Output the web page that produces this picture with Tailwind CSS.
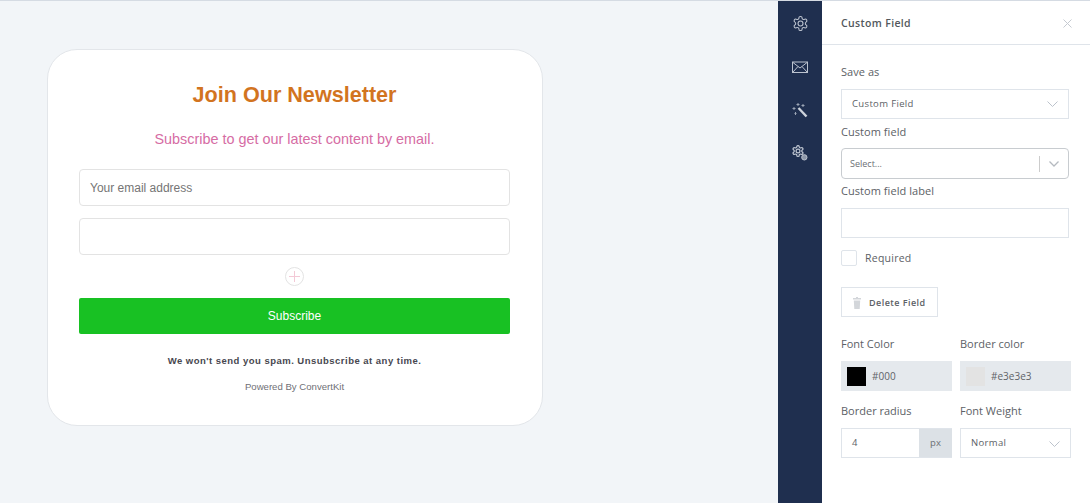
<!doctype html>
<html>
<head>
<meta charset="utf-8">
<script src="https://cdn.jsdelivr.net/npm/@tailwindcss/browser@4"></script>
</head>
<body class="m-0 overflow-hidden">
<div class="flex flex-col w-[1090px] h-[503px] overflow-hidden bg-[#f2f5f8] font-['Liberation_Sans',sans-serif]">
  <div class="h-px shrink-0 bg-[#d5dbe3]"></div>
  <div class="flex flex-1 min-h-0">
    <main class="w-[778px] shrink-0 pl-[47px] pt-[48px]">
      <section class="w-[496px] h-[377px] box-border bg-white border border-[#e3e6ea] rounded-[30px] pl-[31px] pr-[32px] flex flex-col">
        <h1 class="mt-[31px] h-[28px] leading-[28px] text-center text-[21.6px] font-bold text-[#d2741f]">Join Our Newsletter</h1>
        <p class="mt-[21px] h-[18px] leading-[18px] text-center text-[14.4px] text-[#d66ca4]">Subscribe to get our latest content by email.</p>
        <div class="mt-[21px] h-[37px] box-border border border-[#e3e3e3] rounded-[4px] pl-[10px] flex items-center text-[12px] text-[#757575]">Your email address</div>
        <div class="mt-[12px] h-[37px] box-border border border-[#e3e3e3] rounded-[4px]"></div>
        <div class="mt-[12px] h-[19px] flex justify-center">
          <svg width="19" height="19" viewBox="0 0 19 19" fill="none"><circle cx="9.5" cy="9.5" r="9" stroke="#e3e3e3"/><path d="M9.500 4v11M4 9.500h11" stroke="#f3c9d6"/></svg>
        </div>
        <button class="mt-[12px] h-[36px] shrink-0 rounded-[2px] bg-[#18c123] text-white text-[12px] font-['Liberation_Sans',sans-serif]">Subscribe</button>
        <p class="mt-[21px] h-[12px] leading-[12px] text-center text-[9.5px] font-bold tracking-[0.48px] text-[#47474f]">We won't send you spam. Unsubscribe at any time.</p>
        <p class="mt-[14px] h-[12px] leading-[12px] text-center text-[9.6px] text-[#6f7076]">Powered By ConvertKit</p>
      </section>
    </main>

    <nav class="w-[44px] shrink-0 bg-[#1f2f4f] flex flex-col items-center pt-[14px] gap-[27px]">
      <svg class="w-[17px] h-[17px]" viewBox="0 0 24 24" fill="none" stroke="#bcc3cf" stroke-width="1.500"><path d="M12.220 2h-.44a2 2 0 0 0-2 2v.18a2 2 0 0 1-1 1.730l-.43.25a2 2 0 0 1-2 0l-.15-.08a2 2 0 0 0-2.730.73l-.22.38a2 2 0 0 0 .73 2.730l.15.1a2 2 0 0 1 1 1.720v.51a2 2 0 0 1-1 1.740l-.15.09a2 2 0 0 0-.73 2.730l.22.38a2 2 0 0 0 2.730.73l.15-.08a2 2 0 0 1 2 0l.43.25a2 2 0 0 1 1 1.730V20a2 2 0 0 0 2 2h.44a2 2 0 0 0 2-2v-.18a2 2 0 0 1 1-1.730l.43-.25a2 2 0 0 1 2 0l.15.08a2 2 0 0 0 2.730-.73l.22-.39a2 2 0 0 0-.73-2.730l-.15-.08a2 2 0 0 1-1-1.740v-.5a2 2 0 0 1 1-1.740l.15-.09a2 2 0 0 0 .73-2.730l-.22-.38a2 2 0 0 0-2.730-.73l-.15.08a2 2 0 0 1-2 0l-.43-.25a2 2 0 0 1-1-1.730V4a2 2 0 0 0-2-2z"/><circle cx="12" cy="12" r="3.500"/></svg>
      <svg class="w-[16px] h-[16px]" viewBox="0 0 16 16" fill="none" stroke="#bcc3cf" stroke-width="1"><rect x=".5" y="3" width="15" height="10.500"/><path d="M1 3.500 8 9l7-5.500M1 13l5-5.500M15 13l-5-5.500"/></svg>
      <svg class="w-[16px] h-[16px]" viewBox="0 0 16 16" fill="none"><path d="M6.500 6 14.500 14.500" stroke="#cdd3dc" stroke-width="2.400"/><path d="M6 1v3M4.500 2.500h3M11 2v3M9.500 3.500h3M2 5v3M.5 6.500h3M3.500 10v3M2.500 11.500h2" stroke="#9aa4b4"/></svg>
      <svg class="w-[16px] h-[16px]" viewBox="0 0 24 24" fill="none" stroke="#bcc3cf" stroke-width="2.200"><g transform="scale(.82) translate(-1 -1)"><path d="M12.220 2h-.44a2 2 0 0 0-2 2v.18a2 2 0 0 1-1 1.730l-.43.25a2 2 0 0 1-2 0l-.15-.08a2 2 0 0 0-2.730.73l-.22.38a2 2 0 0 0 .73 2.730l.15.1a2 2 0 0 1 1 1.720v.51a2 2 0 0 1-1 1.740l-.15.09a2 2 0 0 0-.73 2.730l.22.38a2 2 0 0 0 2.730.73l.15-.08a2 2 0 0 1 2 0l.43.25a2 2 0 0 1 1 1.730V20a2 2 0 0 0 2 2h.44a2 2 0 0 0 2-2v-.18a2 2 0 0 1 1-1.730l.43-.25a2 2 0 0 1 2 0l.15.08a2 2 0 0 0 2.730-.73l.22-.39a2 2 0 0 0-.73-2.730l-.15-.08a2 2 0 0 1-1-1.740v-.5a2 2 0 0 1 1-1.740l.15-.09a2 2 0 0 0 .73-2.730l-.22-.38a2 2 0 0 0-2.730-.73l-.15.08a2 2 0 0 1-2 0l-.43-.25a2 2 0 0 1-1-1.730V4a2 2 0 0 0-2-2z"/><circle cx="12" cy="12" r="3.500"/></g><circle cx="18.500" cy="18.500" r="4" fill="#8d97a8" stroke="#bcc3cf" stroke-width="1.500"/></svg>
    </nav>

    <aside class="flex-1 bg-white font-['Open_Sans',sans-serif] text-[#5c6166]">
      <header class="h-[44px] box-border border-b border-[#dfe4ea] pt-[2px] pl-[19px] pr-[20px] flex items-center justify-between">
        <span class="text-[10.5px] font-semibold tracking-[0.35px] text-[#52575c]">Custom Field</span>
        <svg class="w-[9px] h-[9px]" viewBox="0 0 9 9" stroke="#c5cad1" fill="none"><path d="M.5.500l8 8M8.500.500l-8 8"/></svg>
      </header>
      <div class="pl-[19px] pr-[21px]">
        <label class="block mt-[20px] h-[15px] leading-[13px] text-[11px] tracking-[0.05px]">Save as</label>
        <div class="mt-[9px] w-[228px] h-[30px] box-border border border-[#dfe4ea] pl-[10px] pr-[10px] flex items-center justify-between text-[9.5px] tracking-[0.35px]">
          <span>Custom Field</span>
          <svg class="w-[11px] h-[6px]" viewBox="0 0 11 6" fill="none" stroke="#bcc3cc"><path d="M.5.500l5 5 5-5"/></svg>
        </div>
        <label class="block mt-[6px] h-[15px] leading-[13px] text-[11px] tracking-[0.05px]">Custom field</label>
        <div class="mt-[8px] w-[228px] h-[31px] box-border border border-[#c8ccd0] rounded-[4px] pl-[8px] flex items-center text-[9px] text-[#6c7075]">
          <span class="flex-1">Select...</span>
          <span class="w-px h-[16px] bg-[#cccccc]"></span>
          <span class="w-[28px] flex justify-center"><svg class="w-[10px] h-[6px]" viewBox="0 0 10 6" fill="none" stroke="#b5bac0" stroke-width="1.300"><path d="M.5.500 5 5 9.500.500"/></svg></span>
        </div>
        <label class="block mt-[5px] h-[15px] leading-[13px] text-[11px] tracking-[0.05px]">Custom field label</label>
        <div class="mt-[9px] w-[228px] h-[30px] box-border border border-[#dfe4ea]"></div>
        <div class="mt-[12px] h-[16px] flex items-center gap-[8px]">
          <span class="w-[16px] h-[16px] box-border border border-[#dfe4ea] rounded-[2px]"></span>
          <span class="text-[10.5px] tracking-[0.25px] pt-[2px]">Required</span>
        </div>
        <button class="mt-[21px] w-[97px] h-[30px] box-border border border-[#dfe4ea] pl-[11px] pt-[1px] flex items-center gap-[8px] text-[9px] font-semibold tracking-[0.45px] text-[#5c6166]">
          <svg class="w-[8px] h-[12px]" viewBox="0 0 8 12" fill="#d3d6da"><path d="M3 0h2v1h3v1.500H0V1h3zM.8 3.500h6.400l-.5 8.500H1.300z"/></svg>
          Delete Field
        </button>
        <div class="mt-[20px] flex gap-[8px] w-[230px]">
          <div class="w-[111px]">
            <label class="block h-[15px] leading-[13px] text-[11px]">Font Color</label>
            <div class="mt-[9px] h-[30px] bg-[#e5e9ed] pl-[6px] flex items-center gap-[6px] text-[10px] text-[#5f6368]">
              <span class="w-[19px] h-[19px] bg-black"></span>#000
            </div>
          </div>
          <div class="w-[111px]">
            <label class="block h-[15px] leading-[13px] text-[11px]">Border color</label>
            <div class="mt-[9px] h-[30px] bg-[#e5e9ed] pl-[6px] flex items-center gap-[6px] text-[10px] text-[#5f6368]">
              <span class="w-[19px] h-[19px] bg-[#e3e3e3]"></span>#e3e3e3
            </div>
          </div>
        </div>
        <div class="mt-[13px] flex gap-[8px] w-[230px]">
          <div class="w-[111px]">
            <label class="block h-[15px] leading-[13px] text-[11px]">Border radius</label>
            <div class="mt-[9px] h-[30px] box-border border border-r-0 border-[#dfe4ea] flex items-center text-[9.5px]">
              <span class="flex-1 pl-[10px] pt-[1px]">4</span>
              <span class="w-[33px] h-full pt-[1px] bg-[#dce1e6] flex items-center justify-center text-[#6c7075]">px</span>
            </div>
          </div>
          <div class="w-[111px]">
            <label class="block h-[15px] leading-[13px] text-[11px]">Font Weight</label>
            <div class="mt-[9px] h-[30px] box-border border border-[#dfe4ea] pl-[10px] pr-[10px] pt-[1px] flex items-center justify-between text-[9.5px] tracking-[0.35px]">
              <span>Normal</span>
              <svg class="w-[11px] h-[6px]" viewBox="0 0 11 6" fill="none" stroke="#bcc3cc"><path d="M.5.500l5 5 5-5"/></svg>
            </div>
          </div>
        </div>
      </div>
    </aside>
  </div>
</div>
</body>
</html>
